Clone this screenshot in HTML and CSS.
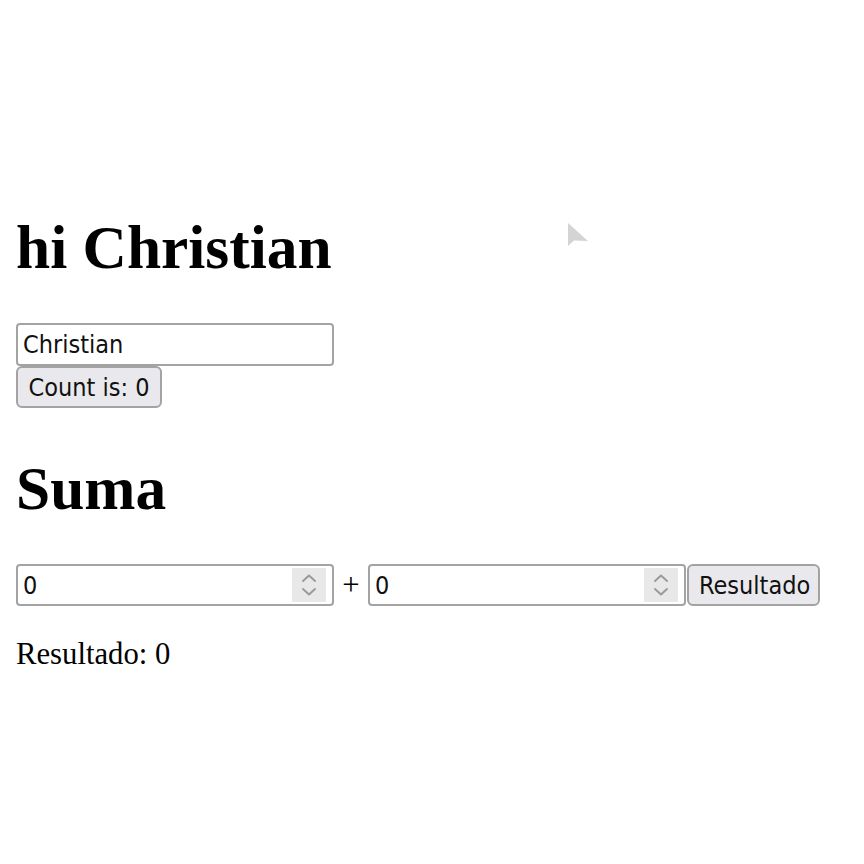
FILE: index.html
```html
<!DOCTYPE html>
<html lang="es">
<head>
<meta charset="utf-8">
<title>Vite App</title>
<link rel="stylesheet" href="styles.css">
</head>
<body>
<div class="app">
  <h1 class="title">hi Christian</h1>
  <div class="greet">
    <input class="field name-field" type="text" value="Christian">
    <button class="btn count-btn" type="button">Count is: 0</button>
  </div>

  <h1 class="title">Suma</h1>
  <div class="sum-row">
    <div class="field num-field">
      <input class="num-input" type="text" value="0">
      <span class="spinner">
        <svg width="34" height="34" viewBox="0 0 34 34" aria-hidden="true">
          <path d="M11 13 L17 7.5 L23 13" fill="none" stroke="#9a9a9a" stroke-width="2" stroke-linecap="round" stroke-linejoin="round"/>
          <path d="M11 21 L17 26.5 L23 21" fill="none" stroke="#9a9a9a" stroke-width="2" stroke-linecap="round" stroke-linejoin="round"/>
        </svg>
      </span>
    </div>
    <span class="plus">+</span>
    <div class="field num-field">
      <input class="num-input" type="text" value="0">
      <span class="spinner">
        <svg width="34" height="34" viewBox="0 0 34 34" aria-hidden="true">
          <path d="M11 13 L17 7.5 L23 13" fill="none" stroke="#9a9a9a" stroke-width="2" stroke-linecap="round" stroke-linejoin="round"/>
          <path d="M11 21 L17 26.5 L23 21" fill="none" stroke="#9a9a9a" stroke-width="2" stroke-linecap="round" stroke-linejoin="round"/>
        </svg>
      </span>
    </div>
    <button class="btn result-btn" type="button">Resultado</button>
  </div>
  <p class="result">Resultado: 0</p>

  <svg class="cursor" width="22" height="30" viewBox="0 0 22 30" aria-hidden="true">
    <path d="M1 1 L1 24 L7 18.5 L21 19 Z" fill="#d4d4d4"/>
  </svg>
</div>
</body>
</html>
```

FILE: styles.css
```css
html, body {
  margin: 0;
  padding: 0;
  background: #ffffff;
}

body {
  font-family: "Liberation Serif", "Times New Roman", serif;
  font-size: 30.7px;
  color: #000;
}

.app {
  position: relative;
  padding: 171px 16px 0 16px;
  height: 693px;
}

.title {
  font-family: "Liberation Serif", "Times New Roman", serif;
  font-weight: 700;
  font-size: 61.4px;
  line-height: 70px;
  margin: 41px 0;
}

.app > .title:first-child {
  margin-top: 41px;
}

.greet {
  display: flex;
  flex-direction: column;
  align-items: flex-start;
  padding-bottom: 4px;
}

.field {
  box-sizing: border-box;
  border: 2px solid #a3a3a3;
  border-radius: 4px;
  background: #fff;
  font-family: "DejaVu Sans Condensed", "DejaVu Sans", sans-serif;
  font-stretch: condensed;
  font-size: 25px;
  color: #111;
}

.name-field {
  width: 318px;
  height: 43px;
  padding: 0 5px;
  outline: none;
}

.btn {
  box-sizing: border-box;
  height: 42px;
  border: 2px solid #a3a3a3;
  border-radius: 6px;
  background: #e9e9ed;
  font-family: "DejaVu Sans Condensed", "DejaVu Sans", sans-serif;
  font-stretch: condensed;
  font-size: 25px;
  color: #111;
  padding: 0 10px;
  margin: 0;
}

.count-btn {
  width: 146px;
}

.sum-row {
  display: flex;
  align-items: center;
  height: 42px;
}

.num-field {
  width: 318px;
  height: 42px;
  display: flex;
  align-items: center;
  padding: 0 6px 0 5px;
}

.num-input {
  flex: 1;
  min-width: 0;
  border: none;
  outline: none;
  background: transparent;
  font: inherit;
  color: inherit;
  padding: 0;
}

.spinner {
  width: 34px;
  height: 34px;
  background: #e8e8e8;
  display: flex;
}

.plus {
  width: 34px;
  text-align: center;
  font-size: 30.7px;
  line-height: 35px;
}

.result-btn {
  width: 133px;
  margin-left: 1px;
}

.result {
  margin: 0;
  padding-top: 31px;
  line-height: 35px;
}

.cursor {
  position: absolute;
  left: 567px;
  top: 222px;
}
```
